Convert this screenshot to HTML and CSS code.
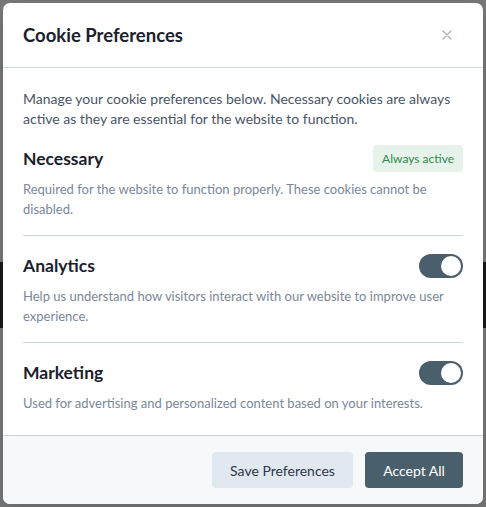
FILE: index.html
```html
<!DOCTYPE html>
<html lang="en">
<head>
<meta charset="utf-8">
<title>Cookie Preferences</title>
<link rel="stylesheet" href="styles.css">
</head>
<body>
<div class="page">
  <p class="page-text">so you'll always have access to relevant information. If you can't find it, contact us.</p>
  <div class="page-band"></div>
</div>
<div class="backdrop"></div>
<div class="modal" role="dialog" aria-labelledby="cp-title">
  <header class="modal-header">
    <h2 id="cp-title" class="modal-title">Cookie Preferences</h2>
    <button class="close-btn" aria-label="Close">
      <svg width="10" height="10" viewBox="0 0 10 10"><path d="M1 1L9 9M9 1L1 9" stroke="#a3afbf" stroke-width="1.2" fill="none" stroke-linecap="round"/></svg>
    </button>
  </header>
  <div class="modal-body">
    <p class="intro">Manage your cookie preferences below. Necessary cookies are always active as they are essential for the website to function.</p>
    <section class="cat">
      <div class="cat-row">
        <h3 class="cat-title">Necessary</h3>
        <span class="badge">Always active</span>
      </div>
      <p class="cat-desc">Required for the website to function properly. These cookies cannot be disabled.</p>
    </section>
    <section class="cat">
      <div class="cat-row">
        <h3 class="cat-title">Analytics</h3>
        <span class="toggle on"><span class="knob"></span></span>
      </div>
      <p class="cat-desc">Help us understand how visitors interact with our website to improve user experience.</p>
    </section>
    <section class="cat last">
      <div class="cat-row">
        <h3 class="cat-title">Marketing</h3>
        <span class="toggle on"><span class="knob"></span></span>
      </div>
      <p class="cat-desc">Used for advertising and personalized content based on your interests.</p>
    </section>
  </div>
  <footer class="modal-footer">
    <button class="btn btn-secondary">Save Preferences</button>
    <button class="btn btn-primary">Accept All</button>
  </footer>
</div>
</body>
</html>
```
FILE: styles.css
```css
* { box-sizing: border-box; }
html, body { margin: 0; padding: 0; }
body {
  width: 486px;
  height: 507px;
  overflow: hidden;
  font-family: "Lato", "Noto Sans", sans-serif;
  background: #ffffff;
  position: relative;
}
.page {
  position: absolute;
  inset: 0;
  color: #222;
}
.page-text {
  margin: 0;
  padding: 0 4px;
  font-size: 16px;
  line-height: 26px;
}
.page-band {
  position: absolute;
  left: 0;
  right: 0;
  top: 262px;
  height: 66px;
  background: #333;
}
.backdrop {
  position: absolute;
  inset: 0;
  background: rgba(0, 0, 0, 0.53);
}
.modal {
  position: relative;
  margin: 3px 0 0 3px;
  width: 480px;
  height: 501px;
  background: #ffffff;
  border-radius: 7px;
  overflow: hidden;
  display: flex;
  flex-direction: column;
  box-shadow: 0 10px 25px rgba(0,0,0,0.15);
}
.modal-header {
  height: 65px;
  padding: 0 31px 0 20px;
  display: flex;
  align-items: center;
  justify-content: space-between;
  border-bottom: 1px solid #cfd8e3;
}
.modal-title {
  margin: 0;
  font-size: 18.5px;
  font-weight: 700;
  color: #1a202c;
}
.close-btn {
  border: 0;
  background: none;
  padding: 0;
  width: 10px;
  height: 10px;
  display: flex;
  cursor: pointer;
}
.modal-body {
  padding: 21px 20px 20px;
  flex: 1;
}
.intro {
  margin: 0;
  font-size: 14px;
  line-height: 20px;
  color: #4a5568;
}
.cat {
  padding: 16px 0;
  border-bottom: 1px solid #cbd5e0;
}
.cat.last {
  border-bottom: 0;
  padding-bottom: 0;
}
.cat-row {
  height: 27px;
  display: flex;
  align-items: center;
  justify-content: space-between;
}
.cat-title {
  margin: 0;
  font-size: 17.5px;
  font-weight: 700;
  color: #1a202c;
}
.badge {
  height: 27px;
  padding: 0 9px;
  display: inline-flex;
  align-items: center;
  background: #e7f3ea;
  color: #2f8a4a;
  font-size: 12px;
  border-radius: 4px;
}
.toggle {
  width: 44px;
  height: 24px;
  border-radius: 12px;
  background: #4a5f6c;
  position: relative;
  display: inline-block;
}
.knob {
  position: absolute;
  top: 2px;
  right: 2px;
  width: 20px;
  height: 20px;
  border-radius: 50%;
  background: #ffffff;
}
.cat-desc {
  margin: 7px 0 0;
  font-size: 13px;
  line-height: 20px;
  color: #7a879a;
}
.modal-footer {
  height: 69px;
  padding: 0 20px;
  display: flex;
  align-items: center;
  justify-content: flex-end;
  gap: 12px;
  background: #f7f8fa;
  border-top: 1px solid #cbd5e0;
}
.btn {
  height: 36px;
  border: 0;
  border-radius: 4px;
  font-family: inherit;
  font-size: 14px;
  padding: 0 16px;
  cursor: pointer;
}
.btn-secondary {
  width: 141px;
  background: #e2e8f0;
  color: #2d3748;
}
.btn-primary {
  width: 98px;
  background: #4a5f6c;
  color: #ffffff;
}
```
